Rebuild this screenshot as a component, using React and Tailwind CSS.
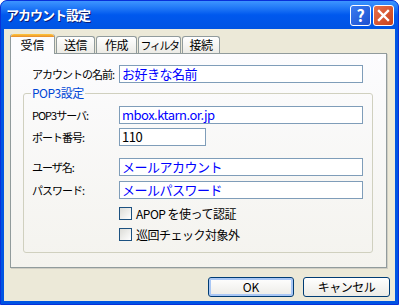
import React from "react";

const font = { fontFamily: '"MS UI Gothic", "Noto Sans CJK JP", sans-serif' };

function Field({ label, value, width = "w-[244px]", color = "text-[#0000ff]", className = "" }) {
  return (
    <div className={`flex items-center h-[18px] ${className}`}>
      <span className="w-[87px] whitespace-nowrap text-[11px] tracking-[-1px] text-black leading-[18px]">{label}</span>
      <div
        className={`${width} h-[18px] border border-[#7f9db9] bg-white px-[2px] whitespace-nowrap text-[13px] leading-[16px] tracking-[-0.5px] ${color}`}
      >
        {value}
      </div>
    </div>
  );
}

function Check({ label, className = "" }) {
  return (
    <div className={`flex items-center h-[13px] pl-[87px] ${className}`}>
      <div className="w-[13px] h-[13px] border border-[#1c5180] bg-gradient-to-br from-[#dcdcd7] to-white" />
      <span className="ml-[4px] whitespace-nowrap text-[12px] tracking-[-0.5px] leading-[13px] text-black">{label}</span>
    </div>
  );
}

function Tab({ label, active, className = "" }) {
  if (active)
    return (
      <div
        className={`relative z-10 h-[20px] -mb-[1px] border-x border-[#919b9c] bg-[#fcfcfe] rounded-t-[3px] ${className}`}
      >
        <div className="h-[3px] rounded-t-[3px] bg-gradient-to-b from-[#ffc83c] to-[#e68b2c]" />
        <div className="text-center whitespace-nowrap text-[12px] leading-[16px] text-black">{label}</div>
      </div>
    );
  return (
    <div
      className={`h-[17px] border border-b-0 border-[#919b9c] rounded-t-[3px] bg-gradient-to-b from-white to-[#ecebe6] text-center whitespace-nowrap overflow-hidden leading-[16px] text-black ${className}`}
    >
      {label}
    </div>
  );
}

export default function App() {
  return (
    <div
      style={font}
      className="w-[399px] h-[305px] flex flex-col bg-[#0054e3] rounded-t-[7px] overflow-hidden border border-[#0831d9]"
    >
      {/* title bar */}
      <div className="h-[28px] flex items-center pl-[5px] pr-[4px] bg-gradient-to-b from-[#3d95ff] via-[#0058ee] to-[#0054e3]">
        <span className="text-white font-bold text-[13px] tracking-[-1px] [text-shadow:1px_1px_0_#0a1e7a]">
          アカウント設定
        </span>
        <div className="ml-auto flex gap-[2px] mt-[1px]">
          <div className="w-[21px] h-[21px] rounded-[3px] border border-white bg-gradient-to-br from-[#3c7cf0] to-[#1c4fd0] text-white font-bold text-[16px] leading-[19px] text-center">
            ?
          </div>
          <div className="w-[21px] h-[21px] rounded-[3px] border border-white bg-gradient-to-br from-[#e8704a] to-[#c8401a] flex items-center justify-center">
            <svg width="13" height="13" viewBox="0 0 13 13">
              <path d="M2 2 L11 11 M11 2 L2 11" stroke="white" strokeWidth="2.4" strokeLinecap="square" />
            </svg>
          </div>
        </div>
      </div>

      {/* client */}
      <div className="flex-1 mx-[3px] mb-[3px] bg-[#ece9d8] flex flex-col">
        <div className="flex items-end h-[24px] pl-[6px]">
          <Tab label="受信" active className="w-[45px]" />
          <Tab label="送信" className="w-[39px] ml-[1px] text-[12px] tracking-[-0.5px]" />
          <Tab label="作成" className="w-[41px] ml-[1px] text-[12px] tracking-[-0.5px]" />
          <Tab label="フィルタ" className="w-[43px] ml-[1px] text-[11px] tracking-[-1.5px]" />
          <Tab label="接続" className="w-[38px] ml-[1px] text-[12px] tracking-[-0.5px]" />
        </div>

        <div className="ml-[6px] w-[377px] h-[215px] border border-[#919b9c] bg-gradient-to-b from-[#fcfcfe] to-[#f4f3ee] shadow-[1px_1px_0_#d0cec4]">
          <div className="mt-[11px] pl-[21px]">
            <Field label="アカウントの名前:" value="お好きな名前" />
          </div>

          <fieldset className="ml-[12px] mt-[3px] w-[350px] h-[167px] border border-[#d0d0bf] rounded-[3px] pl-[8px]">
            <legend className="ml-[-1px] px-[1px] text-[12px] leading-[14px] text-[#0046d5] tracking-[-0.5px]">
              POP3設定
            </legend>
            <Field label="POP3サーバ:" value="mbox.ktarn.or.jp" className="mt-[6px]" />
            <Field label="ポート番号:" value="110" width="w-[87px]" color="text-black" className="mt-[4px]" />
            <Field label="ユーザ名:" value="メールアカウント" className="mt-[12px]" />
            <Field label="パスワード:" value="メールパスワード" className="mt-[5px]" />
            <Check label="APOP を使って認証" className="mt-[8px]" />
            <Check label="巡回チェック対象外" className="mt-[8px]" />
          </fieldset>
        </div>

        <div className="flex justify-end gap-[9px] pr-[5px] mt-[9px]">
          <button className="w-[86px] h-[20px] rounded-[3px] border border-[#003c74] bg-gradient-to-b from-white to-[#ecebe6] shadow-[inset_0_0_0_2px_#a9c7f5] text-[12px] leading-[16px] text-black">
            OK
          </button>
          <button className="w-[87px] h-[20px] rounded-[3px] border border-[#003c74] bg-gradient-to-b from-white to-[#ecebe6] text-[12px] leading-[16px] tracking-[-0.5px] text-black">
            キャンセル
          </button>
        </div>
      </div>
    </div>
  );
}
